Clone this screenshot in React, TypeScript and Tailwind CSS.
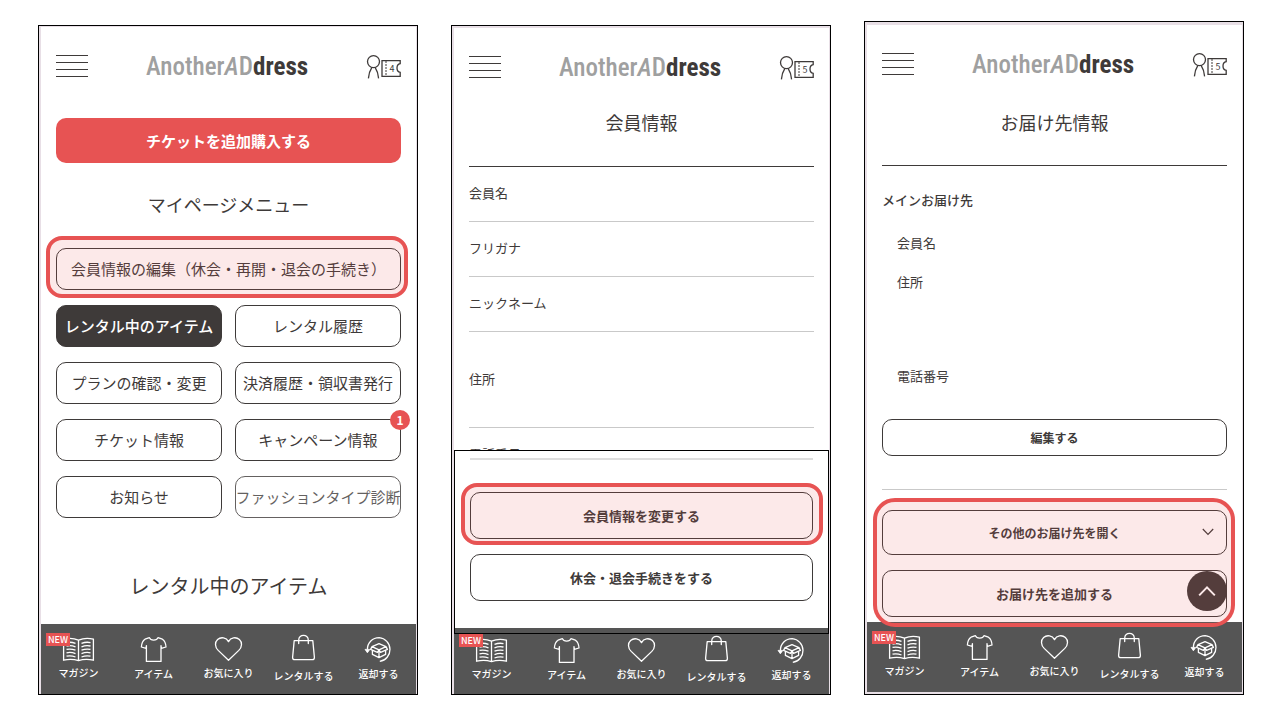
import type { ReactNode } from "react";

type ScreenProps = {
  className: string;
  tickets: number;
  footerClassName?: string;
  children: ReactNode;
};

const navItems = [
  { label: "マガジン", icon: <BookIcon />, isNew: true },
  { label: "アイテム", icon: <ShirtIcon /> },
  { label: "お気に入り", icon: <HeartIcon /> },
  { label: "レンタルする", icon: <BagIcon /> },
  { label: "返却する", icon: <ReturnIcon /> },
];

function BookIcon() {
  return (
    <svg width="33" height="28" viewBox="0 0 33 28" fill="none" stroke="white" strokeWidth="1.3">
      <path d="M16.5 6.2C12 4.2 6 4 1.6 5.2V26.2C6 25.2 12 25.2 16.5 26.6C21 25.2 27 25.2 31.4 26.2V5.2C27 4 21 4.2 16.5 6.2ZM16.5 6.2V26.6" />
      <path d="M4.5 8.6Q9 7.6 13.5 9.4M4.5 12Q9 11 13.5 12.8M4.5 15.4Q9 14.4 13.5 16.2M4.5 18.8Q9 17.8 13.5 19.6M4.5 22.2Q9 21.2 13.5 23M19.5 9.4Q24 7.6 28.5 8.6M19.5 12.8Q24 11 28.5 12M19.5 16.2Q24 14.4 28.5 15.4M19.5 19.6Q24 17.8 28.5 18.8M19.5 23Q24 21.2 28.5 22.2" />
    </svg>
  );
}

function ShirtIcon() {
  return (
    <svg width="33" height="29" viewBox="0 0 33 29" fill="none" stroke="white" strokeWidth="1.3" strokeLinejoin="round">
      <path d="M12.4 3.6C13.6 7 19.8 7 21 3.6L25.4 5.2C27.6 6.6 28.8 9.4 29 13L24.3 14.4L24 11.6V27.4H9.4V11.6L9.1 14.4L4.4 13C4.6 9.4 5.8 6.6 8 5.2Z" />
    </svg>
  );
}

function HeartIcon() {
  return (
    <svg width="33" height="28" viewBox="0 0 33 28" fill="none" stroke="white" strokeWidth="1.3" strokeLinejoin="round">
      <path d="M16.5 26.2L6.2 16.4C2.8 13 2.6 8.2 5.6 5.5C9 2.6 14.3 3.4 16.5 7.6C18.7 3.4 24 2.6 27.4 5.5C30.4 8.2 30.2 13 26.8 16.4Z" />
    </svg>
  );
}

function BagIcon() {
  return (
    <svg width="33" height="31" viewBox="0 0 33 31" fill="none" stroke="white" strokeWidth="1.3" strokeLinejoin="round" strokeLinecap="round">
      <path d="M7.2 6.6H25.8L27.4 23.4Q27.4 25.6 25.2 25.6H7.8Q5.6 25.6 5.6 23.4Z" />
      <path d="M11.7 9.6V6.2C11.7 -.2 21.3 -.2 21.3 6.2V9.6" />
    </svg>
  );
}

function ReturnIcon() {
  return (
    <svg width="33" height="29" viewBox="0 0 33 29" fill="none" stroke="white" strokeWidth="1.3" strokeLinejoin="round">
      <path d="M5.4 15.5C5.4 8.6 10.5 3.6 17.2 3.6A12 12 0 0 1 17.8 27.4" />
      <path d="M3 15.4L5.4 18.8L7.8 15.4Z" fill="white" strokeWidth=".8" />
      <path d="M17 9.6L24 12.6L17 15.8L10 12.6ZM10 12.6L8.6 15.4L15.4 18.4L17 15.8L18.6 18.4L25.4 15.4L24 12.6M10.4 16.6V20.4L17 23.6L23.6 20.4V16.6M17 15.8V23.6" />
    </svg>
  );
}

function TicketIcon({ count }: { count: number }) {
  return (
    <svg width="35" height="26" viewBox="0 -2 35 26" fill="none" stroke="#3e3a39" strokeWidth="1.3">
      <circle cx="7.5" cy="6.6" r="6" />
      <path d="M5.9 12.4C4.2 15 2.8 18.4 2.4 23.4M9.1 12.4C10.8 15 12.2 18.4 12.6 23.4" />
      <path d="M16 5.6H34.2V8.6Q31 9.2 31 13T34.2 17.4V21.4H16Z" />
      <path d="M20 6V21" strokeDasharray="2 1" strokeWidth="1" />
      <text x="26" y="17" textAnchor="middle" fontSize="9" fill="#3e3a39" stroke="none">
        {count}
      </text>
    </svg>
  );
}

function Header({ tickets }: { tickets: number }) {
  return (
    <header className="flex h-[78px] items-center justify-between px-[15px]">
      <button aria-label="メニュー" className="flex w-8 flex-col gap-1.5">
        <span className="h-px w-full bg-[#3e3a39]" />
        <span className="h-px w-full bg-[#3e3a39]" />
        <span className="h-px w-full bg-[#3e3a39]" />
        <span className="h-px w-full bg-[#3e3a39]" />
      </button>
      <a
        href="#"
        className="pt-0.5 font-['Liberation_Sans_Narrow','Roboto_Condensed','Liberation_Sans',sans-serif] text-[25px] leading-8 font-medium text-[#9fa0a0]"
      >
        Another<i>A</i>D<span className="font-bold text-[#3e3a39]">dress</span>
      </a>
      <a href="#" aria-label="チケット">
        <TicketIcon count={tickets} />
      </a>
    </header>
  );
}

function Footer({ className = "" }: { className?: string }) {
  return (
    <nav className={`grid grid-cols-5 bg-[#555] py-2.5 ${className}`}>
      {navItems.map((item) => (
        <a key={item.label} href="#" className="relative flex flex-col items-center gap-[3px] text-white">
          {item.icon}
          {item.isNew && (
            <span className="absolute -top-px left-[5px] w-6 bg-[#e75353] text-center text-[9px] leading-[13px] font-medium">
              NEW
            </span>
          )}
          <span className="text-[10px] leading-4 font-medium whitespace-nowrap">{item.label}</span>
        </a>
      ))}
    </nav>
  );
}

function Screen({ className, tickets, footerClassName, children }: ScreenProps) {
  return (
    <section className={`min-w-0 flex-1 overflow-hidden border border-black bg-[#e8dfe6] pr-px pl-0.5 ${className}`}>
      <div className="bg-white">
        <Header tickets={tickets} />
        {children}
      </div>
      <Footer className={footerClassName} />
    </section>
  );
}

function Highlight({ className }: { className: string }) {
  return (
    <div className={`pointer-events-none absolute z-10 border-4 border-[#e75353] bg-[#e75353]/13 ${className}`} />
  );
}

function OutlineButton({ className, children }: { className: string; children: ReactNode }) {
  return (
    <button className={`block rounded-[10px] border border-[#3e3a39] whitespace-nowrap ${className}`}>
      {children}
    </button>
  );
}

function MyPage() {
  return (
    <main className="px-[15px] pt-[13px]">
      <button className="h-[45px] w-full rounded-[10px] bg-[#e75353] pt-px text-[15px] font-bold text-white">
        チケットを追加購入する
      </button>
      <h2 className="pt-[27px] pb-[29px] text-center text-lg leading-[29px]">マイページメニュー</h2>
      <div className="relative">
        <OutlineButton className="h-[42px] w-full text-[15px]">会員情報の編集（休会・再開・退会の手続き）</OutlineButton>
        <Highlight className="-top-3 -right-[7px] -bottom-2 -left-2.5 rounded-2xl" />
      </div>
      <div className="mt-[15px] grid grid-cols-2 gap-x-[13px] gap-y-[15px] text-[15px]">
        <OutlineButton className="h-[42px] bg-[#3e3a39] font-medium text-white">レンタル中のアイテム</OutlineButton>
        <OutlineButton className="h-[42px]">レンタル履歴</OutlineButton>
        <OutlineButton className="h-[42px]">プランの確認・変更</OutlineButton>
        <OutlineButton className="h-[42px]">決済履歴・領収書発行</OutlineButton>
        <OutlineButton className="h-[42px]">チケット情報</OutlineButton>
        <OutlineButton className="relative h-[42px]">
          キャンペーン情報
          <span className="absolute -top-2.5 -right-2.5 size-5 rounded-full bg-[#e75353] text-xs leading-5 font-bold text-white">
            1
          </span>
        </OutlineButton>
        <OutlineButton className="h-[42px]">お知らせ</OutlineButton>
        <OutlineButton className="flex h-[42px] min-w-0 items-center justify-center overflow-hidden opacity-80">
          ファッションタイプ診断
        </OutlineButton>
      </div>
      <h2 className="pt-[53px] pb-[23px] text-center text-xl leading-[30px]">レンタル中のアイテム</h2>
    </main>
  );
}

function MemberInfo() {
  return (
    <main>
      <div className="px-[15px]">
        <h2 className="border-b border-[#3e3a39] pt-[3px] pb-[30px] text-center text-lg leading-[27px]">会員情報</h2>
        <dl className="text-[13px] leading-[52px]">
          <dt className="border-b border-[#c9c9c9] pb-0.5">会員名</dt>
          <dt className="border-b border-[#c9c9c9] pb-0.5">フリガナ</dt>
          <dt className="border-b border-[#c9c9c9] pb-0.5">ニックネーム</dt>
          <dt className="border-b border-[#c9c9c9] pb-0.5 leading-[93px]">住所</dt>
          <dt className="h-[22px] overflow-hidden">電話番号</dt>
        </dl>
      </div>
      <div className="relative z-10 border border-black bg-white text-[13px] font-bold">
        <div className="px-[15px] pt-[7px] pb-[27px]">
          <hr className="border-t-2 border-[#dedede]" />
          <div className="relative mt-8">
            <OutlineButton className="h-[47px] w-full">会員情報を変更する</OutlineButton>
            <Highlight className="-top-[9px] -right-2.5 -bottom-1.5 -left-[9px] rounded-2xl" />
          </div>
          <OutlineButton className="mt-[15px] h-[47px] w-full">休会・退会手続きをする</OutlineButton>
        </div>
        <div className="h-[5px] bg-[#555]" />
      </div>
    </main>
  );
}

function AddressInfo() {
  return (
    <main className="px-[15px] pb-[5px]">
      <h2 className="border-b border-[#3e3a39] pt-1.5 pb-[29px] text-center text-lg leading-[27px]">お届け先情報</h2>
      <h3 className="pt-6 text-[13px] leading-5 font-medium">メインお届け先</h3>
      <dl className="px-[15px] pt-[23px] text-[13px] leading-5">
        <dt>会員名</dt>
        <dt className="pt-[19px]">住所</dt>
        <dt className="pt-[74px] pb-[33px]">電話番号</dt>
      </dl>
      <OutlineButton className="h-[37px] w-full text-xs font-bold">編集する</OutlineButton>
      <hr className="mt-[33px] mb-5 border-[#c9c9c9]" />
      <div className="relative">
        <OutlineButton className="relative h-[45px] w-full text-xs font-bold">
          その他のお届け先を開く
          <svg
            className="absolute top-[17px] right-3"
            width="12"
            height="8"
            viewBox="0 0 12 8"
            fill="none"
            stroke="currentColor"
            strokeWidth="1.2"
          >
            <path d="M.8 1L6 6.4L11.2 1" />
          </svg>
        </OutlineButton>
        <OutlineButton className="mt-[15px] h-[47px] w-full text-[13px] font-bold">お届け先を追加する</OutlineButton>
        <button
          aria-label="ページの先頭へ"
          className="absolute right-0 bottom-1.5 flex size-10 items-center justify-center rounded-full bg-[#3e3a39]"
        >
          <svg width="18" height="12" viewBox="0 0 18 12" fill="none" stroke="white" strokeWidth="2">
            <path d="M1.2 10.4L9 2.4L16.8 10.4" />
          </svg>
        </button>
        <Highlight className="-top-3 -right-2 -bottom-2.5 -left-[9px] rounded-[22px]" />
      </div>
    </main>
  );
}

export default function App() {
  return (
    <div className="flex min-h-screen items-start gap-[33px] bg-white pt-[21px] pr-9 pl-[38px] font-['Noto_Sans_CJK_JP',sans-serif] text-[#3e3a39]">
      <Screen className="mt-1 pt-px" tickets={4}>
        <MyPage />
      </Screen>
      <Screen className="mt-1 pt-0.5" tickets={5} footerClassName="-mt-[9px] -mb-px">
        <MemberInfo />
      </Screen>
      <Screen className="pt-[3px] pb-0.5" tickets={5}>
        <AddressInfo />
      </Screen>
    </div>
  );
}
